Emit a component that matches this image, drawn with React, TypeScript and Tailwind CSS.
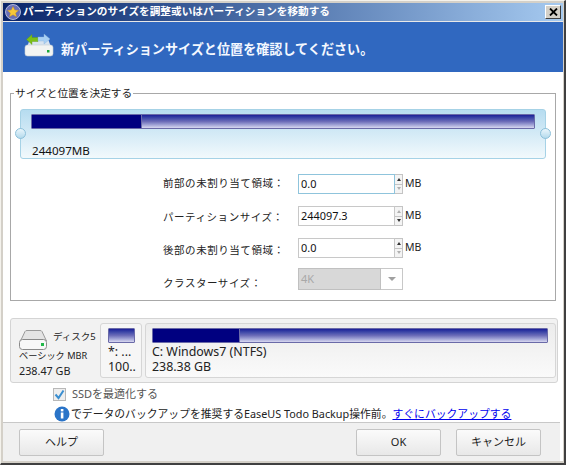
import React from "react";

const font = { fontFamily: '"Noto Sans", "Noto Sans CJK JP", sans-serif' };

function Spin({ upDark, downDark }: { upDark: boolean; downDark: boolean }) {
  return (
    <div className="w-[8px] h-[20px] flex flex-col border border-l-0 border-[#c4c4c4] bg-[#f4f4f4]">
      <div className="flex-1 flex items-center justify-center border-b border-[#c4c4c4]">
        <div className={`w-0 h-0 border-l-[2px] border-r-[2px] border-b-[3px] border-l-transparent border-r-transparent ${upDark ? "border-b-[#333333]" : "border-b-[#b0b0b0]"}`} />
      </div>
      <div className="flex-1 flex items-center justify-center">
        <div className={`w-0 h-0 border-l-[2px] border-r-[2px] border-t-[3px] border-l-transparent border-r-transparent ${downDark ? "border-t-[#333333]" : "border-t-[#b0b0b0]"}`} />
      </div>
    </div>
  );
}

function NumberRow({ label, value, focus, upDark, downDark, labelClass }: { label: string; value: string; focus?: boolean; upDark: boolean; downDark: boolean; labelClass: string }) {
  return (
    <div className="flex items-center h-[20px]">
      <div className={`w-[136px] pl-[1px] text-[10.5px] tracking-[0.55px] text-[#222222] whitespace-nowrap ${labelClass}`}>{label}</div>
      <div className={`w-[97px] h-[20px] border bg-white flex items-center pl-[2px] text-[10.9px] text-[#111111] ${focus ? "border-[#8fc4dc]" : "border-[#c8c8c8]"}`}>{value}</div>
      <Spin upDark={upDark} downDark={downDark} />
      <div className="ml-[2px] -mt-[1px] text-[10.5px] text-[#222222]">MB</div>
    </div>
  );
}

function Bar({ fill }: { fill: string }) {
  return (
    <div className="relative h-[15px] border border-[#6a6aa8] rounded-[1px] bg-gradient-to-b from-[#1c1c98] via-[#6c6cb8] to-[#d8d8f0]">
      {fill !== "0" && <div className="h-full bg-[#000080] border-r border-[#6a6aa8]" style={{ width: fill }} />}
    </div>
  );
}

function Btn({ children }: { children: React.ReactNode }) {
  return (
    <div className="w-[85px] h-[27px] flex items-center justify-center border border-[#c4c4c4] rounded-[2px] bg-gradient-to-b from-[#fbfbfb] to-[#e8e8e8] text-[11px] text-[#222222]">
      {children}
    </div>
  );
}

function DiskIcon() {
  return (
    <svg width="29" height="20" viewBox="0 0 29 20">
      <path d="M1.5 11 L6 1.5 Q6.5 0.5 8 0.5 H21 Q22.5 0.5 23 1.5 L27.5 11 Z" fill="#e4e4e4" stroke="#9a9a9a" />
      <rect x="0.5" y="9.5" width="27" height="10" rx="3" fill="#f8f8f8" stroke="#8a8a8a" />
      <rect x="22" y="13" width="3" height="3" fill="#22b84a" />
    </svg>
  );
}

export default function App() {
  return (
    <div style={font} className="w-[566px] h-[465px] bg-[#d4d0c8] border-t border-l border-t-[#f4f2ec] border-l-[#f4f2ec] border-r-[2px] border-b-[2px] border-r-[#404040] border-b-[#404040] pt-[2px] pl-[2px] pr-[1px] pb-[2px] flex flex-col overflow-hidden">
      {/* Title bar */}
      <div className="h-[18px] shrink-0 flex items-center bg-gradient-to-r from-[#0a246a] to-[#a6caf0] pl-[2px] pr-[2px]">
        <svg width="16" height="16" viewBox="0 0 16 16" className="shrink-0">
          <circle cx="8" cy="8" r="7.5" fill="#6a70b8" stroke="#d0d4ec" strokeWidth="0.8" />
          <path d="M8 2.4 L9.7 6 L13.5 6.4 L10.6 9 L11.5 12.8 L8 10.8 L4.5 12.8 L5.4 9 L2.5 6.4 L6.3 6 Z" fill="#f8c838" stroke="#c89020" strokeWidth="0.4" />
        </svg>
        <div className="ml-[2px] text-[10.65px] font-bold text-white whitespace-nowrap">パーティションのサイズを調整或いはパーティションを移動する</div>
        <div className="ml-auto w-[16px] h-[14px] flex items-center justify-center bg-[#d4d0c8] border border-t-white border-l-white border-r-[#404040] border-b-[#404040] text-black">
          <svg width="9" height="8" viewBox="0 0 9 8"><path d="M1 0.5 L8 7.5 M8 0.5 L1 7.5" stroke="#000000" strokeWidth="1.8" /></svg>
        </div>
      </div>
      <div className="h-[1px] shrink-0 bg-[#e8e8e8]" />
      {/* Blue header */}
      <div className="h-[50px] shrink-0 bg-[#3068c0] flex items-center pl-[21px]">
        <svg width="30" height="24" viewBox="0 0 30 24" className="shrink-0 -mt-[4px]">
          <path d="M3 14 L6 6 H24 L27 14 Z" fill="#d8e4f0" />
          <rect x="1" y="12" width="28" height="11" rx="2.5" fill="#f2f4f2" stroke="#c4ccd4" strokeWidth="0.6" />
          <rect x="23" y="17" width="2.5" height="2.5" fill="#18a838" />
          <path d="M14 4.5 L8 4.5 L8 1.5 L2.5 6.5 L8 11.5 L8 8.5 L14 8.5 Z" fill="#7cc018" stroke="#5a9810" strokeWidth="0.4" />
          <path d="M14 4 L20 4 L20 1 L26 6 L20 11 L20 8 L14 8 Z" fill="#a8d0f4" stroke="#88b4dc" strokeWidth="0.4" />
        </svg>
        <div className="ml-[7px] mt-[5px] text-[13.1px] font-bold text-[#f4f8ff] whitespace-nowrap">新パーティションサイズと位置を確認してください。</div>
      </div>
      {/* Body */}
      <div className="flex-1 min-h-0 bg-white flex flex-col">
        <fieldset className="ml-[7px] mt-[12px] w-[545px] h-[217px] shrink-0 border border-[#a8a8a8] px-[9px] pt-[0px]">
          <legend className="ml-[-6px] px-[1px] text-[10.7px] text-[#222222] leading-[18px]">サイズと位置を決定する</legend>
          <div className="relative h-[50px] mt-[7px] w-[526px] border border-[#a6d2e6] rounded-[3px] bg-gradient-to-b from-[#b6dcf0] to-[#f2f9fc] px-[10px] pt-[4px]">
            <Bar fill="22%" />
            <div className="mt-[14px] ml-[1px] text-[11.6px] leading-[16px] text-[#111111]">244097MB</div>
            <div className="absolute left-[-6px] top-[18px] w-[11px] h-[11px] rounded-full border border-[#8cc0da] bg-gradient-to-b from-[#eaf6fc] to-[#b4daec]" />
            <div className="absolute right-[-6px] top-[18px] w-[11px] h-[11px] rounded-full border border-[#8cc0da] bg-gradient-to-b from-[#eaf6fc] to-[#b4daec]" />
          </div>
          <div className="ml-[142px] mt-[15px] flex flex-col gap-[12px]">
            <NumberRow label="前部の未割り当て領域：" value="0.0" focus upDark downDark={false} labelClass="pt-[0px]" />
            <NumberRow label="パーティションサイズ：" value="244097.3" upDark={false} downDark labelClass="pt-[3px]" />
            <NumberRow label="後部の未割り当て領域：" value="0.0" upDark downDark={false} labelClass="pt-[6px]" />
            <div className="flex items-center h-[22px] -mt-[2px]">
              <div className="w-[136px] pl-[1px] text-[10.5px] tracking-[0.55px] text-[#222222] pt-[10px] whitespace-nowrap">クラスターサイズ：</div>
              <div className="w-[83px] h-[22px] border border-[#c0c0c0] bg-[#d8d8d8] flex items-center pl-[2px] text-[11px] text-[#a8a8a8]">4K</div>
              <div className="w-[22px] h-[22px] border border-l-0 border-[#c8c8c8] bg-white flex items-center justify-center">
                <div className="w-0 h-0 border-l-[4px] border-r-[4px] border-t-[4px] border-l-transparent border-r-transparent border-t-[#a0a0a0]" />
              </div>
            </div>
          </div>
        </fieldset>
        {/* Disk map */}
        <div className="ml-[7px] mt-[17px] w-[548px] h-[65px] shrink-0 border border-[#d4d4d4] rounded-[3px] bg-[#f2f2f2] flex items-center gap-[3px] pl-[8px] pr-[2px]">
          <div className="w-[78px] shrink-0 h-full">
            <div className="flex items-start">
              <div className="mt-[11px]"><DiskIcon /></div>
              <div className="ml-[5px] mt-[11px] text-[9.5px] text-[#222222] whitespace-nowrap">ディスク5</div>
            </div>
            <div className="-mt-[1px] text-[9.2px] leading-[14px] text-[#222222] whitespace-nowrap">ベーシック MBR</div>
            <div className="text-[10.8px] leading-[15px] text-[#222222] whitespace-nowrap">238.47 GB</div>
          </div>
          <div className="w-[42px] h-[55px] shrink-0 border border-[#d6d6d6] rounded-[3px] bg-[#f6f6f6] pl-[7px] pr-[6px] pt-[4px]">
            <Bar fill="0" />
            <div className="text-[12.4px] leading-[15px] mt-[1px] text-[#222222]">*: ...</div>
            <div className="text-[12.4px] leading-[15px] text-[#222222] whitespace-nowrap">100..</div>
          </div>
          <div className="w-[411px] h-[55px] shrink-0 border border-[#d6d6d6] rounded-[3px] bg-gradient-to-b from-[#ececec] to-[#fafafa] pl-[6px] pr-[7px] pt-[4px]">
            <Bar fill="22%" />
            <div className="text-[12.4px] leading-[15px] mt-[1px] text-[#222222]">C: Windows7 (NTFS)</div>
            <div className="text-[12.4px] leading-[15px] text-[#222222]">238.38 GB</div>
          </div>
        </div>
        {/* Options */}
        <div className="ml-[50px] mt-[4px] flex items-center h-[14px]">
          <div className="w-[13px] h-[13px] border border-[#b8b8b8] bg-[#eeeeee] flex items-center justify-center">
            <svg width="11" height="11" viewBox="0 0 11 11"><path d="M1.5 5.5 L4.5 9 L9.5 1.5" fill="none" stroke="#3a8ed0" strokeWidth="2" /></svg>
          </div>
          <div className="ml-[6px] text-[11px] text-[#555555] whitespace-nowrap">SSDを最適化する</div>
        </div>
        <div className="ml-[51px] mt-[5px] flex items-center h-[16px]">
          <svg width="16" height="16" viewBox="0 0 16 16" className="shrink-0">
            <circle cx="8" cy="8" r="7.5" fill="#2a74c8" />
            <rect x="6.8" y="6.5" width="2.6" height="6" fill="#ffffff" />
            <rect x="6.8" y="3" width="2.6" height="2.4" fill="#ffffff" />
          </svg>
          <div className="ml-[1px] text-[10.82px] text-[#222222] whitespace-nowrap">でデータのバックアップを推奨するEaseUS Todo Backup操作前。<span className="text-[#0000ee] underline">すぐにバックアップする</span></div>
        </div>
        {/* Footer */}
        <div className="mt-auto h-[39px] shrink-0 mr-[3px] border-t border-[#c8c8c8] bg-[#f0f0f0] flex items-center pl-[16px] pr-[19px] gap-[15px]">
          <Btn>ヘルプ</Btn>
          <div className="flex-1" />
          <Btn>OK</Btn>
          <Btn>キャンセル</Btn>
        </div>
        <div className="h-[2px] shrink-0" />
      </div>
    </div>
  );
}
